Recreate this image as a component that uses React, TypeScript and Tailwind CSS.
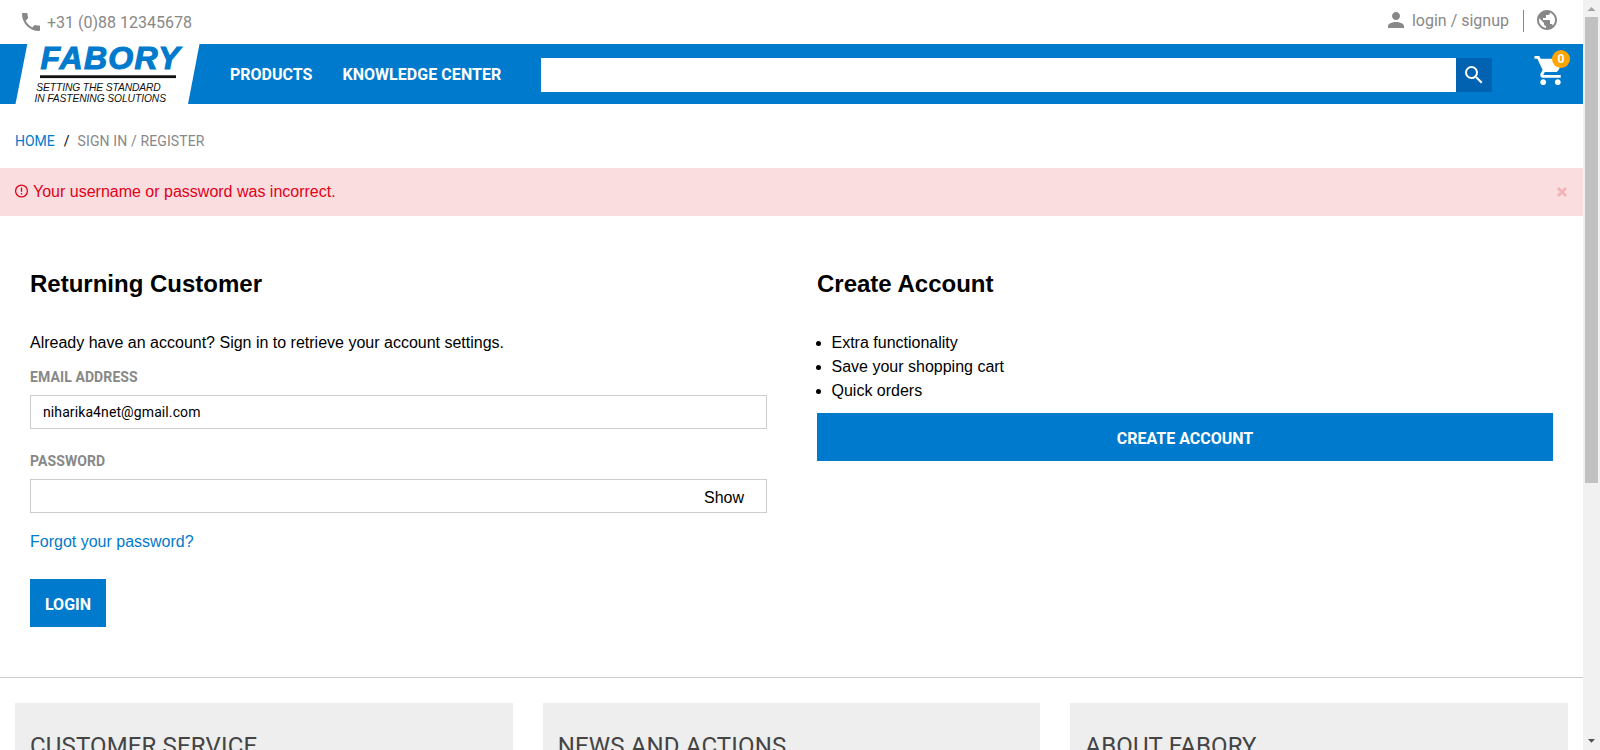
import { MdPhone, MdPerson, MdPublic, MdSearch, MdShoppingCart } from "react-icons/md";

const benefits = ["Extra functionality", "Save your shopping cart", "Quick orders"];
const footerColumns = ["CUSTOMER SERVICE", "NEWS AND ACTIONS", "ABOUT FABORY"];

function Logo() {
  return (
    <svg width="200" height="60" viewBox="0 0 200 60" className="shrink-0 overflow-visible font-['Liberation_Sans',sans-serif] italic">
      <polygon points="27.3,0 199.5,0 188,60 15.5,60" fill="#fff" />
      <text x="40.5" y="24.6" fontSize="32" fontWeight="bold" fill="#007acc" stroke="#007acc" strokeWidth="1.1" textLength="139">
        FABORY
      </text>
      <rect x="40" y="31.3" width="136" height="2.8" fill="#111" />
      <text x="36.3" y="47.2" fontSize="10.3" fill="#111" textLength="124.5">
        SETTING THE STANDARD
      </text>
      <text x="34.5" y="58.2" fontSize="10.3" fill="#111" textLength="131.5">
        IN FASTENING SOLUTIONS
      </text>
    </svg>
  );
}

function TopBar() {
  return (
    <div className="flex h-11 items-start justify-between pl-[19px] pr-6 font-['Roboto',sans-serif] text-base text-[#888]">
      <div className="flex pt-[10px]">
        <MdPhone size={24} />
        <span className="ml-1 mt-px leading-6">+31 (0)88 12345678</span>
      </div>
      <div className="flex pt-2">
        <MdPerson size={24} />
        <span className="ml-1 mt-px leading-6">login / signup</span>
        <span className="ml-[14px] mt-[2px] h-[22px] w-px bg-[#888]" />
        <MdPublic size={24} className="ml-[11px]" />
      </div>
    </div>
  );
}

function Header() {
  return (
    <header className="flex h-[60px] bg-[#007acc] font-['Roboto',sans-serif]">
      <Logo />
      <nav className="flex w-[341px] gap-[30px] pl-[30px] pt-[19px] text-base font-bold leading-6 text-white">
        <a>PRODUCTS</a>
        <a className="whitespace-nowrap tracking-[0.05px]">KNOWLEDGE CENTER</a>
      </nav>
      <div className="mt-[14px] flex h-[34px] w-[951px]">
        <input className="w-[915px] bg-white px-3 text-sm outline-none" />
        <button className="flex w-9 items-center justify-center bg-[#0062b1] text-white">
          <MdSearch size={24} />
        </button>
      </div>
      <div className="relative ml-[41px] mt-[9px] h-9 w-9 text-white">
        <MdShoppingCart size={35} />
        <span className="absolute left-[19px] top-[-3px] flex h-[18px] w-[18px] items-center justify-center rounded-full bg-[#ffa500] text-xs font-bold">
          0
        </span>
      </div>
    </header>
  );
}

function Alert() {
  return (
    <div className="flex h-12 items-start justify-between bg-[#fadddf] pl-[15px] pr-4 pt-3 text-base leading-6 text-[#e2001a]">
      <div className="flex">
        <svg width="14" height="14" viewBox="0 0 14 14" className="mt-1" fill="none" stroke="currentColor" strokeWidth="1.3">
          <circle cx="6.5" cy="7" r="5.9" />
          <path d="M6.5 3.4v4.3M6.5 9v1.4" />
        </svg>
        <span className="ml-[4px]">Your username or password was incorrect.</span>
      </div>
      <svg width="10" height="10" viewBox="0 0 10 10" className="mt-[7px]" stroke="#f6b1b7" strokeWidth="2.6">
        <path d="M1 1l8 8M9 1l-8 8" />
      </svg>
    </div>
  );
}

function ReturningCustomer() {
  return (
    <section className="w-[737px]">
      <h2 className="text-2xl font-bold leading-8">Returning Customer</h2>
      <p className="mt-[31px] leading-6">Already have an account? Sign in to retrieve your account settings.</p>
      <label className="mt-3 block font-['Roboto',sans-serif] text-sm font-bold leading-5 tracking-[0.1px] text-[#888]">EMAIL ADDRESS</label>
      <input
        className="mt-2 block h-[34px] w-full border border-[#ccc] px-3 font-['Roboto',sans-serif] text-sm tracking-[0.1px] outline-none"
        defaultValue="niharika4net@gmail.com"
      />
      <label className="mt-[22px] block font-['Roboto',sans-serif] text-sm font-bold leading-5 tracking-[0.1px] text-[#888]">PASSWORD</label>
      <div className="mt-2 flex h-[34px] border border-[#ccc]">
        <input type="password" className="min-w-0 flex-1 px-3 outline-none" />
        <span className="mr-[22px] pt-[6px] leading-6">Show</span>
      </div>
      <a className="mt-[17px] block leading-6 text-[#007acc]">Forgot your password?</a>
      <button className="mt-[25px] block h-12 w-[76px] bg-[#007acc] pt-1 font-['Roboto',sans-serif] font-bold text-white">LOGIN</button>
    </section>
  );
}

function CreateAccount() {
  return (
    <section className="w-[736px]">
      <h2 className="text-2xl font-bold leading-8">Create Account</h2>
      <ul className="mt-[31px] leading-6">
        {benefits.map((b) => (
          <li key={b} className="flex items-center">
            <span className="mt-px ml-[-1px] h-[5px] w-[5px] rounded-full bg-black" />
            <span className="ml-[10.5px]">{b}</span>
          </li>
        ))}
      </ul>
      <button className="mt-[10px] block h-12 w-full bg-[#007acc] pt-1 font-['Roboto',sans-serif] font-bold text-white">CREATE ACCOUNT</button>
    </section>
  );
}

function Scrollbar() {
  return (
    <div className="flex h-full w-[17px] flex-col items-center bg-[#f1f1f1]">
      <svg width="17" height="17" viewBox="0 0 17 17">
        <path d="M4.5 11h8L8.5 7z" fill="#a3a3a3" />
      </svg>
      <div className="h-[466px] w-[13px] bg-[#c1c1c1]" />
      <svg width="17" height="17" viewBox="0 0 17 17" className="mt-auto">
        <path d="M5 6h7L8.5 9.8z" fill="#505050" />
      </svg>
    </div>
  );
}

export default function App() {
  return (
    <div className="flex h-[750px] w-[1600px] overflow-hidden bg-white font-['Liberation_Sans',Arial,sans-serif] text-base text-black">
      <div className="w-[1583px] shrink-0 overflow-hidden">
        <TopBar />
        <Header />
        <div className="flex h-16 pl-[15px] pt-[27px] font-['Roboto',sans-serif] text-sm leading-5">
          <a className="text-[#007acc]">HOME</a>
          <span className="ml-[9px]">/</span>
          <span className="ml-2 tracking-[0.12px] text-[#888]">SIGN IN / REGISTER</span>
        </div>
        <Alert />
        <main className="flex h-[461px] justify-between pl-[30px] pr-[30px] pt-[52px]">
          <ReturningCustomer />
          <CreateAccount />
        </main>
        <footer className="grid grid-cols-3 gap-[30px] border-t border-[#ccc] px-[15px] pt-[25px]">
          {footerColumns.map((c) => (
            <div key={c} className="h-[200px] bg-[#eee] px-[15px] pt-[27px] font-['Roboto',sans-serif] text-2xl leading-8 tracking-[0.15px] text-[#444]">
              {c}
            </div>
          ))}
        </footer>
      </div>
      <Scrollbar />
    </div>
  );
}
